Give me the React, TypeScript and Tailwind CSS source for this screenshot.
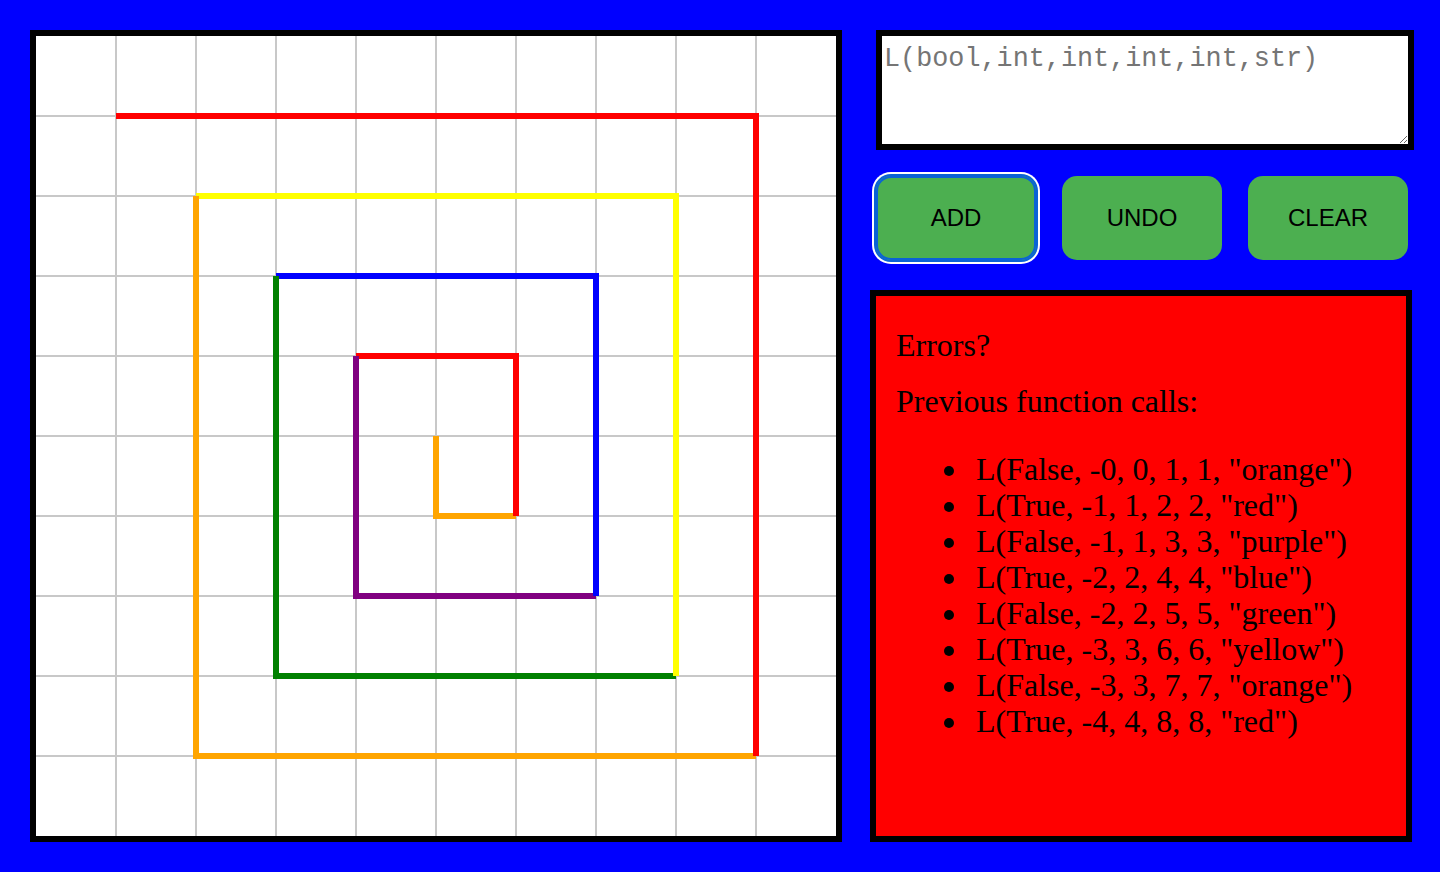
import * as React from 'react';

type Call = { flip: boolean; x: number; y: number; w: number; h: number; color: string };

const calls: Call[] = [
  { flip: false, x: -0, y: 0, w: 1, h: 1, color: 'orange' },
  { flip: true, x: -1, y: 1, w: 2, h: 2, color: 'red' },
  { flip: false, x: -1, y: 1, w: 3, h: 3, color: 'purple' },
  { flip: true, x: -2, y: 2, w: 4, h: 4, color: 'blue' },
  { flip: false, x: -2, y: 2, w: 5, h: 5, color: 'green' },
  { flip: true, x: -3, y: 3, w: 6, h: 6, color: 'yellow' },
  { flip: false, x: -3, y: 3, w: 7, h: 7, color: 'orange' },
  { flip: true, x: -4, y: 4, w: 8, h: 8, color: 'red' },
];

const CELL = 80;
const toPx = (gx: number, gy: number) => [400 + gx * CELL, 400 - gy * CELL];

function linePoints(c: Call) {
  const [x0, y0] = toPx(c.x, c.y);
  const x1 = x0 + c.w * CELL;
  const y1 = y0 + c.h * CELL;
  // True: across then down, False: down then across
  return c.flip ? `${x0},${y0} ${x1},${y0} ${x1},${y1}` : `${x0},${y0} ${x0},${y1} ${x1},${y1}`;
}

function Board() {
  const ticks = [1, 2, 3, 4, 5, 6, 7, 8, 9];
  return (
    <div className="w-[812px] h-[812px] shrink-0 border-[6px] border-black bg-white">
      <svg width="800" height="800" viewBox="0 0 800 800" className="block">
        {ticks.map((t) => (
          <React.Fragment key={t}>
            <line x1={t * CELL} y1={0} x2={t * CELL} y2={800} stroke="#c8c8c8" strokeWidth={2} />
            <line x1={0} y1={t * CELL} x2={800} y2={t * CELL} stroke="#c8c8c8" strokeWidth={2} />
          </React.Fragment>
        ))}
        {calls.map((c, i) => (
          <polyline
            key={i}
            points={linePoints(c)}
            fill="none"
            stroke={c.color}
            strokeWidth={6}
            strokeLinejoin="miter"
            strokeLinecap="butt"
          />
        ))}
      </svg>
    </div>
  );
}

const fmt = (c: Call) =>
  `L(${c.flip ? 'True' : 'False'}, ${Object.is(c.x, -0) ? '-0' : c.x}, ${c.y}, ${c.w}, ${c.h}, "${c.color}")`;

export default function App() {
  return (
    <div className="min-h-[872px] w-full bg-[#0000ff] pt-[30px] pl-[30px] flex gap-[28px]">
      <Board />
      <div className="w-[544px] flex flex-col">
        <textarea
          placeholder="L(bool,int,int,int,int,str)"
          className="ml-[6px] w-[538px] h-[120px] border-[6px] border-black bg-white pt-[3px] px-[2px] font-['Liberation_Mono','Courier_New',monospace] text-[26.8px] text-black placeholder:text-[#757575] outline-none"
        />
        <div className="ml-[6px] mt-[26px] flex gap-[26px]">
          <button className="w-[160px] h-[84px] rounded-[15px] bg-[#4caf50] text-[24px] text-black font-['Liberation_Sans',Arial,sans-serif] shadow-[inset_0_0_0_2px_#0a62d6,0_0_0_2px_#0a62d6,0_0_0_4px_white]">
            ADD
          </button>
          <button className="w-[160px] h-[84px] rounded-[15px] bg-[#4caf50] text-[24px] text-black font-['Liberation_Sans',Arial,sans-serif]">
            UNDO
          </button>
          <button className="w-[160px] h-[84px] rounded-[15px] bg-[#4caf50] text-[24px] text-black font-['Liberation_Sans',Arial,sans-serif]">
            CLEAR
          </button>
        </div>
        <div className="mt-[30px] w-[542px] h-[552px] border-[6px] border-black bg-[#ff0000] pt-[31px] pl-[20px] font-['Liberation_Serif','Times_New_Roman',serif] text-[32px] leading-[36px] text-black">
          <p>Errors?</p>
          <p className="mt-[20px]">Previous function calls:</p>
          <ul className="mt-[32px] pl-[48px]">
            {calls.map((c, i) => (
              <li key={i} className="flex items-start">
                <span className="mt-[15px] mr-[22px] w-[10px] h-[10px] shrink-0 rounded-full bg-black" />
                <span>{fmt(c)}</span>
              </li>
            ))}
          </ul>
        </div>
      </div>
    </div>
  );
}
